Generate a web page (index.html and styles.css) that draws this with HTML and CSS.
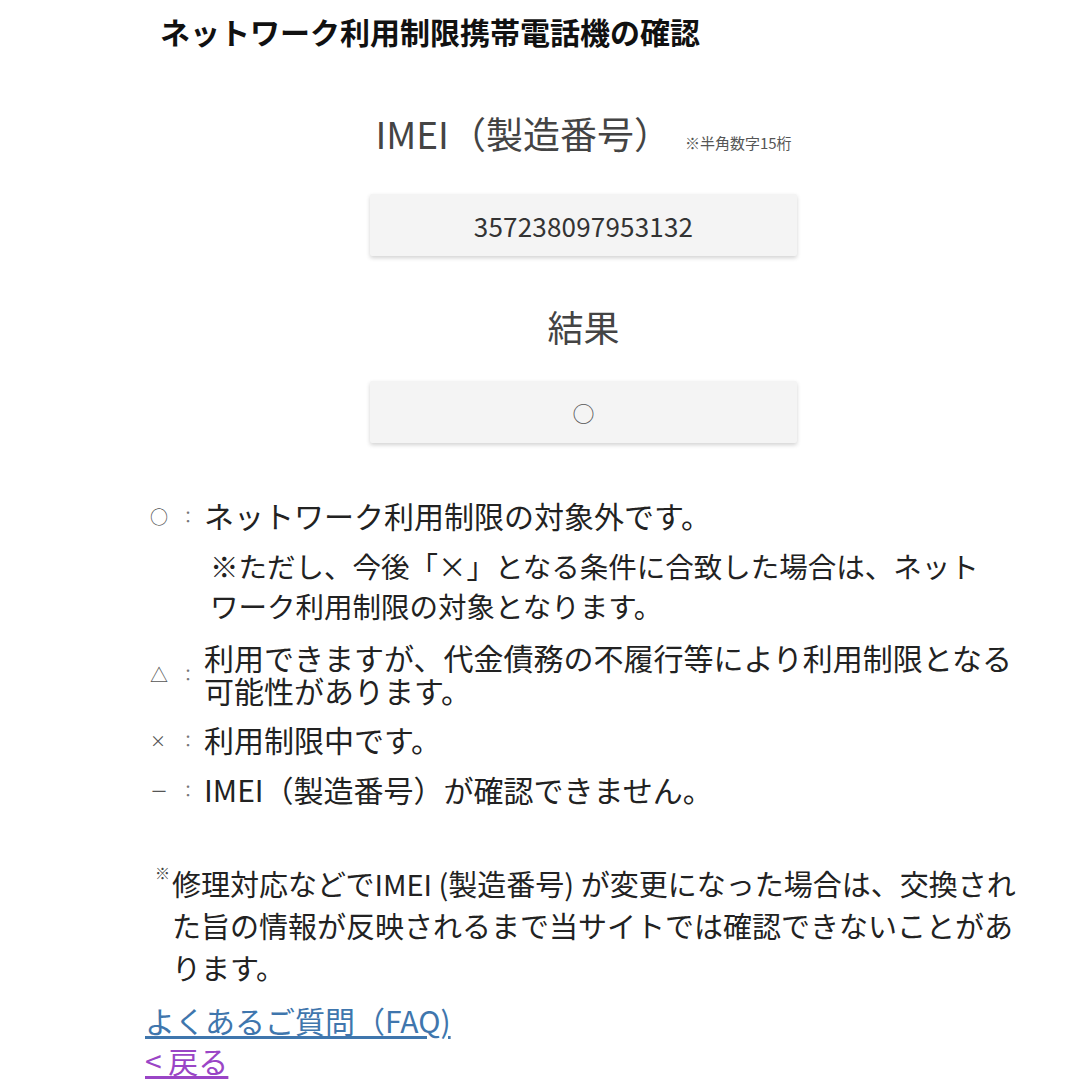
FILE: index.html
```html
<!DOCTYPE html>
<html lang="ja">
<head>
<meta charset="utf-8">
<title>ネットワーク利用制限携帯電話機の確認</title>
<link rel="stylesheet" href="styles.css">
</head>
<body>
<div class="page">
  <h1 class="title">ネットワーク利用制限携帯電話機の確認</h1>

  <div class="field-head">
    <span class="field-label">IMEI（製造番号）</span><span class="field-note">※半角数字15桁</span>
  </div>
  <div class="field-box field-number">357238097953132</div>

  <div class="field-head result-head">
    <span class="field-label">結果</span>
  </div>
  <div class="field-box field-result">○</div>

  <ul class="legend">
    <li class="legend-row">
      <span class="mark mark-circle">○</span><span class="colon">：</span><span class="legend-text">ネットワーク利用制限の対象外です。</span>
    </li>
    <li class="legend-note">※ただし、今後「×」となる条件に合致した場合は、ネットワーク利用制限の対象となります。</li>
    <li class="legend-row">
      <span class="mark mark-tri">△</span><span class="colon">：</span><span class="legend-text">利用できますが、代金債務の不履行等により利用制限となる可能性があります。</span>
    </li>
    <li class="legend-row row-x">
      <span class="mark mark-x">×</span><span class="colon">：</span><span class="legend-text">利用制限中です。</span>
    </li>
    <li class="legend-row row-dash">
      <span class="mark mark-dash">－</span><span class="colon">：</span><span class="legend-text">IMEI（製造番号）が確認できません。</span>
    </li>
  </ul>

  <p class="footnote"><span class="foot-mark">※</span><span class="foot-text">修理対応などでIMEI (製造番号) が変更になった場合は、交換された旨の情報が反映されるまで当サイトでは確認できないことがあります。</span></p>

  <div class="links">
    <a class="link link-faq" href="#faq">よくあるご質問（FAQ)</a>
    <a class="link link-back" href="#back">&lt; 戻る</a>
  </div>
</div>
</body>
</html>
```
FILE: styles.css
```css
html, body {
  margin: 0;
  padding: 0;
  background: #ffffff;
}

body {
  font-family: "Noto Sans CJK JP", "Noto Sans", sans-serif;
  color: #222222;
}

.page {
  margin-left: 145px;
  width: 877px;
  display: flex;
  flex-direction: column;
}

.title {
  margin: 11px 0 0 0;
  padding-left: 15px;
  font-size: 30px;
  line-height: 40px;
  font-weight: 700;
  color: #111111;
}

.field-head {
  margin-top: 57px;
  display: flex;
  justify-content: center;
  align-items: baseline;
  gap: 14px;
  line-height: 50px;
}

.field-label {
  font-size: 37px;
  color: #444444;
  font-weight: 400;
}

.field-note {
  font-size: 15px;
  color: #555555;
}

.result-head {
  margin-top: 45px;
}

.result-head .field-label {
  font-size: 36px;
}

.field-box {
  align-self: center;
  width: 427px;
  height: 62px;
  background: #f4f4f4;
  box-shadow: 0 2px 4px rgba(0, 0, 0, 0.18);
  border-radius: 2px;
  display: flex;
  align-items: center;
  justify-content: center;
  color: #333333;
}

.field-number {
  margin-top: 26px;
  font-size: 26px;
  letter-spacing: 0.2px;
}

.field-result {
  margin-top: 30px;
  font-size: 22px;
  color: #555555;
}

.legend {
  list-style: none;
  margin: 56px 0 0 0;
  padding: 0;
  display: flex;
  flex-direction: column;
}

.legend-row {
  display: flex;
  align-items: center;
  padding-left: 5px;
  margin-top: 15px;
}

.legend-row:first-child {
  margin-top: 0;
}

.row-x {
  margin-top: 16px;
}

.row-dash {
  margin-top: 17px;
}

.mark {
  width: 22px;
  flex: none;
  font-size: 18px;
  color: #555555;
  text-align: left;
}

.mark-x {
  font-size: 16px;
}

.colon {
  width: 32px;
  flex: none;
  text-align: center;
  font-size: 16px;
  color: #777777;
}

.legend-text {
  font-size: 30px;
  line-height: 33px;
  color: #222222;
}

.legend-note {
  margin-top: 14px;
  padding-left: 65px;
  width: 790px;
  font-size: 28.5px;
  line-height: 40px;
  color: #222222;
}

.footnote {
  margin: 56px 0 0 0;
  display: flex;
  align-items: flex-start;
}

.foot-mark {
  flex: none;
  width: 17px;
  padding-left: 10px;
  font-size: 15px;
  line-height: 22px;
  color: #444444;
}

.foot-text {
  max-width: 847px;
  font-size: 29px;
  line-height: 42px;
  color: #222222;
}

.links {
  margin-top: 12px;
  display: flex;
  flex-direction: column;
  align-items: flex-start;
}

.link {
  font-size: 30px;
  line-height: 40px;
  text-decoration: underline;
  text-underline-offset: 3px;
}

.link-faq {
  color: #3f76ad;
}

.link-back {
  color: #9a45c6;
}
```
